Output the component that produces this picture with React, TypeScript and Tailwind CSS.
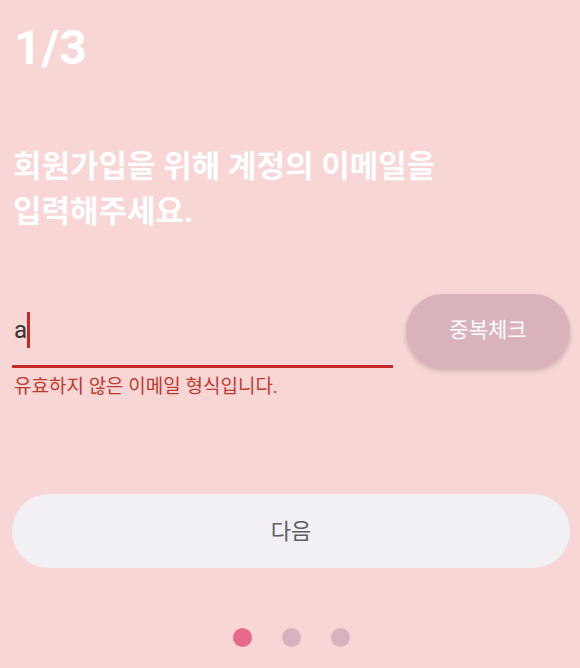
export default function App() {
  return (
    <div
      className="min-h-[668px] w-full bg-[#f8d6d6] pl-[12px] pr-[10px] text-white"
      style={{ fontFamily: 'Roboto, "Noto Sans CJK KR", sans-serif' }}
    >
      <div className="pl-[2px] pt-[24px] text-[48px] font-bold leading-[48px]">1/3</div>

      <h1 className="mt-[72px] pl-px text-[31px] font-bold leading-[45px]">
        회원가입을 위해 계정의 이메일을
        <br />
        입력해주세요.
      </h1>

      <div className="mt-[60px] flex items-start gap-[13px]">
        <div className="flex-1">
          <div className="flex h-[74px] items-center border-b-[3px] border-[#c62828] pl-[2px]">
            <span className="text-[24px] leading-none text-[#333333]">a</span>
            <span className="h-[36px] w-[3px] bg-[#c62828]" />
          </div>
          <p className="mt-[8px] pl-[2px] text-[19px] leading-[22px] text-[#c0392b]">
            유효하지 않은 이메일 형식입니다.
          </p>
        </div>
        <button className="h-[74px] w-[164px] rounded-full bg-[#d9b2bc] text-[21px] text-white shadow-[0_3px_5px_rgba(0,0,0,0.18)]">
          중복체크
        </button>
      </div>

      <button className="mt-[96px] h-[74px] w-full rounded-full bg-[#f2f0f5] text-[22px] text-[#5f5f5f]">
        다음
      </button>

      <div className="mt-[60px] flex justify-center gap-[30px]">
        <span className="h-[19px] w-[19px] rounded-full bg-[#e8698b]" />
        <span className="h-[19px] w-[19px] rounded-full bg-[#d8b2bf]" />
        <span className="h-[19px] w-[19px] rounded-full bg-[#d8b2bf]" />
      </div>
    </div>
  )
}
